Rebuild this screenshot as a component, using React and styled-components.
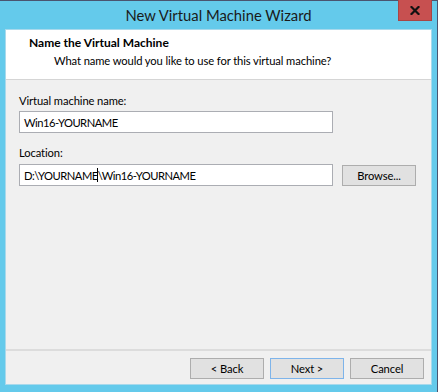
import React from 'react';
import styled, { createGlobalStyle } from 'styled-components';

const GlobalStyle = createGlobalStyle`
  html, body {
    margin: 0;
    padding: 0;
    background: #4a5470;
  }
  body {
    font-family: Lato, "Noto Sans", sans-serif;
    font-size: 11.2px;
    letter-spacing: -0.1px;
    color: #000;
  }
`;

const Window = styled.div`
  position: relative;
  margin-top: 1px;
  width: 437px;
  height: 391px;
  background: #64caeb;
  display: flex;
  flex-direction: column;
  padding: 0 5px 7px 5px;
  box-sizing: border-box;
`;

const TitleBar = styled.div`
  height: 28px;
  display: flex;
  align-items: center;
  justify-content: center;
  font-size: 14.8px;
  letter-spacing: 0;
  color: #1a1a1a;
`;

const CloseButton = styled.div`
  position: absolute;
  top: -1px;
  right: 5px;
  width: 34px;
  height: 21px;
  background: #c75050;
  border: 1px solid #a84545;
  border-top: none;
  box-sizing: border-box;
  display: flex;
  align-items: center;
  justify-content: center;
`;

const Client = styled.div`
  flex: 1;
  display: flex;
  flex-direction: column;
  background: #f0f0f0;
  border: 1px solid #a8d9ec;
`;

const Header = styled.div`
  background: #fff;
  height: 50px;
  border-bottom: 1px solid #d5d5d5;
  padding: 5px 0 0 23px;
  box-sizing: border-box;
`;

const HeaderTitle = styled.div`
  font-weight: bold;
  font-size: 12px;
  letter-spacing: 0;
  line-height: 16px;
`;

const HeaderSub = styled.div`
  padding-left: 25px;
  line-height: 16px;
  margin-top: 2px;
`;

const Body = styled.div`
  flex: 1;
  padding: 13px 0 0 13px;
  display: flex;
  flex-direction: column;
`;

const Label = styled.div`
  line-height: 16px;
  margin-bottom: ${(p) => p.$gap || 2}px;
  margin-top: ${(p) => p.$top || 0}px;
`;

const Row = styled.div`
  display: flex;
  align-items: center;
  gap: 9px;
`;

const TextBox = styled.div`
  width: 314px;
  height: 22px;
  box-sizing: border-box;
  background: #fff;
  border: 1px solid #abadb3;
  padding: 0 4px;
  display: flex;
  align-items: center;
  white-space: pre;
  letter-spacing: -0.5px;
`;

const Caret = styled.span`
  display: inline-block;
  width: 1px;
  height: 14px;
  margin-left: -1px;
  background: #000;
`;

const Button = styled.div`
  width: ${(p) => p.$w || 74}px;
  height: 21px;
  box-sizing: border-box;
  background: #e1e1e1;
  border: 1px solid ${(p) => (p.$default ? '#7eb4ea' : '#adadad')};
  display: flex;
  align-items: center;
  justify-content: center;
`;

const Footer = styled.div`
  border-top: 2px solid #dcdcdc;
  height: 35px;
  box-sizing: border-box;
  display: flex;
  justify-content: flex-end;
  align-items: flex-start;
  gap: 6px;
  padding: 7px 7px 0 0;
`;

function CloseIcon() {
  return (
    <svg width="10" height="9" viewBox="0 0 10 9">
      <path d="M1.5 1 L8.5 8 M8.5 1 L1.5 8" stroke="#111" strokeWidth="2.2" strokeLinecap="square" />
    </svg>
  );
}

export default function App() {
  return (
    <>
      <GlobalStyle />
      <Window>
        <TitleBar>New Virtual Machine Wizard</TitleBar>
        <CloseButton>
          <CloseIcon />
        </CloseButton>
        <Client>
          <Header>
            <HeaderTitle>Name the Virtual Machine</HeaderTitle>
            <HeaderSub>What name would you like to use for this virtual machine?</HeaderSub>
          </Header>
          <Body>
            <Label>Virtual machine name:</Label>
            <TextBox>Win16-YOURNAME</TextBox>
            <Label $top={12} $gap={3}>Location:</Label>
            <Row>
              <TextBox>
                <span>D:\YOURNAME</span>
                <Caret />
                <span>\Win16-YOURNAME</span>
              </TextBox>
              <Button $w={74}>Browse...</Button>
            </Row>
          </Body>
          <Footer>
            <Button>&lt; Back</Button>
            <Button $default>Next &gt;</Button>
            <Button>Cancel</Button>
          </Footer>
        </Client>
      </Window>
    </>
  );
}
